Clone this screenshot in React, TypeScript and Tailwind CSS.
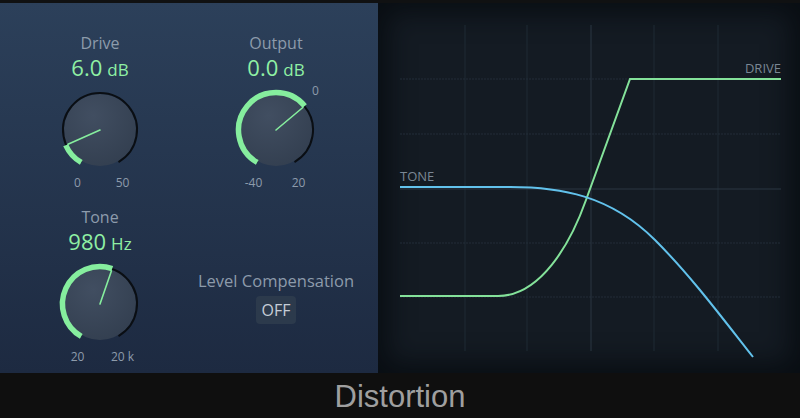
import React from "react";

const C = 45;
function pt(a: number, r: number) {
  const t = (a * Math.PI) / 180;
  return [C + r * Math.sin(t), C - r * Math.cos(t)];
}
function arc(a1: number, a2: number, r: number) {
  const [x1, y1] = pt(a1, r);
  const [x2, y2] = pt(a2, r);
  const large = a2 - a1 > 180 ? 1 : 0;
  return `M${x1.toFixed(2)} ${y1.toFixed(2)} A${r} ${r} 0 ${large} 1 ${x2.toFixed(2)} ${y2.toFixed(2)}`;
}

function Knob({ angle, id }: { angle: number; id: string }) {
  const [px, py] = pt(angle, 35);
  return (
    <svg width="90" height="90" viewBox="0 0 90 90" className="block">
      <defs>
        <radialGradient id={id} cx="40%" cy="30%" r="75%">
          <stop offset="0%" stopColor="#414e61" />
          <stop offset="100%" stopColor="#333f50" />
        </radialGradient>
      </defs>
      <circle cx={C} cy={C} r="36" fill={`url(#${id})`} />
      <path d={arc(-150, 150, 37)} stroke="#0a0e13" strokeWidth="2" fill="none" />
      <path d={arc(-150, angle, 37.5)} stroke="#86ee9e" strokeWidth="5.5" fill="none" />
      <line x1={C} y1={C} x2={px} y2={py} stroke="#86ee9e" strokeWidth="1.6" strokeLinecap="round" />
    </svg>
  );
}

function KnobBlock({
  label,
  num,
  unit,
  angle,
  lo,
  hi,
  id,
  extra,
}: {
  label: string;
  num: string;
  unit: string;
  angle: number;
  lo: string;
  hi: string;
  id: string;
  extra?: string;
}) {
  return (
    <div className="flex flex-col items-center">
      <div className="text-[16px] leading-[20px] text-[#8d9bab]">{label}</div>
      <div className="leading-[28px] text-[#8ff0a4] whitespace-nowrap">
        <span className="text-[22px]">{num}</span>
        <span className="text-[17px] ml-[5px]">{unit}</span>
      </div>
      <div className="relative mt-[1px]">
        <Knob angle={angle} id={id} />
        {extra && (
          <span className="absolute left-[81px] top-[-1px] text-[12px] leading-[14px] text-[#8d9bab]">{extra}</span>
        )}
      </div>
      <div className="mt-[1px] flex gap-[5px] text-[12px] leading-[14px] text-[#8d9bab]">
        <span className="w-[40px] text-center">{lo}</span>
        <span className="w-[40px] text-center">{hi}</span>
      </div>
    </div>
  );
}

function Graph() {
  const vx = [465, 527, 654, 718];
  const hy = [79, 134, 243, 297];
  return (
    <svg width="422" height="370" viewBox="378 3 422 370" className="block">
      {vx.map((x) => (
        <line key={x} x1={x} y1={25} x2={x} y2={351} stroke="#1f2a35" strokeWidth="1" />
      ))}
      {hy.map((y) => (
        <line key={y} x1={400} y1={y} x2={781} y2={y} stroke="#222d38" strokeWidth="1" strokeDasharray="2 1" />
      ))}
      <line x1={591} y1={25} x2={591} y2={351} stroke="#2b3743" strokeWidth="1" />
      <line x1={400} y1={189} x2={781} y2={189} stroke="#2b3743" strokeWidth="1" />
      <path
        d="M400 296 L498 296 C540 296 570 245 586 200 L630 79 L781 79"
        stroke="#84e29a"
        strokeWidth="2"
        fill="none"
        strokeLinejoin="miter"
      />
      <path
        d="M400 187 L510 187 C560 187 610 195 655 240 C690 275 720 315 753 357"
        stroke="#62c2ec"
        strokeWidth="2"
        fill="none"
      />
      <text x={781} y={73} textAnchor="end" fontSize="13" fill="#7a8794" fontFamily="'Open Sans', sans-serif">
        DRIVE
      </text>
      <text x={400} y={181} fontSize="13" fill="#7a8794" fontFamily="'Open Sans', sans-serif">
        TONE
      </text>
    </svg>
  );
}

export default function App() {
  return (
    <div className="w-[800px] h-[418px] bg-[#0f0f0f] flex flex-col overflow-hidden" style={{ fontFamily: "'Open Sans', sans-serif" }}>
      <div className="h-[3px] bg-[#101112]" />
      <div className="h-[370px] flex">
        <div className="w-[378px] h-full bg-gradient-to-b from-[#2c405a] to-[#1d2a41] flex pt-[30px]">
          <div className="w-[200px] flex flex-col items-center gap-[16.5px]">
            <KnobBlock label="Drive" num="6.0" unit="dB" angle={-114} lo="0" hi="50" id="g1" />
            <KnobBlock label="Tone" num="980" unit="Hz" angle={19} lo="20" hi="20 k" id="g3" />
          </div>
          <div className="w-[152px] flex flex-col items-center">
            <KnobBlock label="Output" num="0.0" unit="dB" angle={50} lo="-40" hi="20" id="g2" extra="0" />
            <div className="mt-[81px] text-[16.5px] leading-[20px] text-[#8d9bab] whitespace-nowrap">Level Compensation</div>
            <div className="mt-[5px] w-[40px] h-[28px] rounded-[4px] bg-[#2c3a4c] flex items-center justify-center text-[16px] text-[#c5cdd7]">
              OFF
            </div>
          </div>
        </div>
        <div className="flex-1 h-full bg-[#141b23] shadow-[inset_0_0_26px_10px_rgba(6,9,13,0.75)]">
          <Graph />
        </div>
      </div>
      <div className="h-[45px] flex items-center justify-center pt-[3px]">
        <span className="text-[31px] leading-[36px] text-[#9f9f9f]" style={{ fontFamily: "'Liberation Sans', Arial, sans-serif" }}>
          Distortion
        </span>
      </div>
    </div>
  );
}
